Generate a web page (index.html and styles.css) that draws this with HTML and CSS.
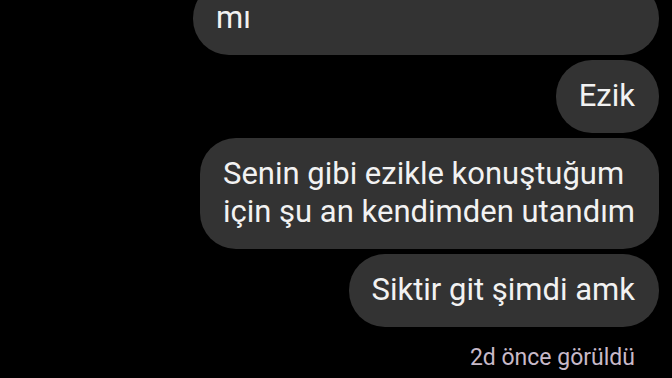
FILE: index.html
```html
<!DOCTYPE html>
<html lang="tr">
<head>
    <meta charset="UTF-8">
    <meta name="viewport" content="width=device-width, initial-scale=1.0">
    <title>Mesajlar</title>
    <link rel="stylesheet" href="styles.css">
</head>
<body>
    <div class="thread">
        <div class="bubble bubble-cut">mı</div>
        <div class="bubble">Ezik</div>
        <div class="bubble">Senin gibi ezikle konuştuğum<br>için şu an kendimden utandım</div>
        <div class="bubble">Siktir git şimdi amk</div>
        <div class="seen">2d önce görüldü</div>
    </div>
</body>
</html>
```

FILE: styles.css
```css
body {
    margin: 0;
    background-color: #000;
    font-family: Roboto, "Noto Sans", sans-serif;
    overflow: hidden;
}
.thread {
    display: flex;
    flex-direction: column;
    align-items: flex-end;
    gap: 5px;
    padding-right: 13px;
}
.bubble {
    background-color: #333333;
    color: #f2f2f2;
    font-size: 31px;
    line-height: 38px;
    padding: 17px 24px 18px 23px;
    border-radius: 36px;
}
.bubble-cut {
    width: 419px;
    margin-top: -18px;
}
.seen {
    color: #c8b9c8;
    font-size: 23px;
    margin-top: 12px;
    padding-right: 24px;
}
```
